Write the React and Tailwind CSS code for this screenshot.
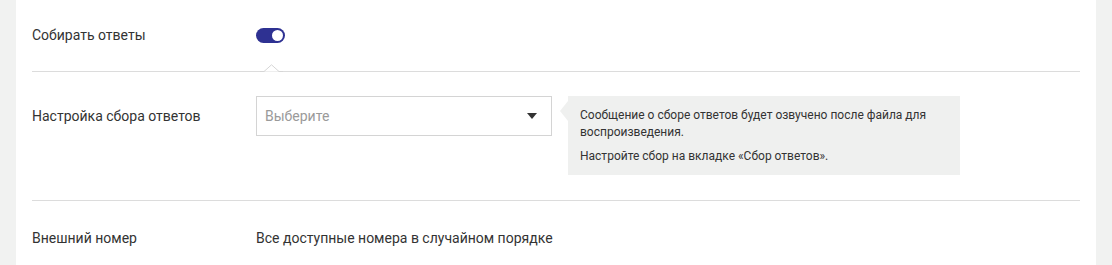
import { useState } from "react"

const font = { fontFamily: "Roboto, 'Liberation Sans', sans-serif" }

function Toggle({ on, onChange }) {
  return (
    <button
      onClick={() => onChange(!on)}
      className={`relative w-[29px] h-[15px] rounded-full ${on ? "bg-[#2e3192]" : "bg-[#bdbdbd]"}`}
    >
      <span
        className={`absolute top-[2px] w-[11px] h-[11px] rounded-full bg-white ${on ? "left-[16px]" : "left-[2px]"}`}
      />
    </button>
  )
}

export default function App() {
  const [collect, setCollect] = useState(true)

  return (
    <div style={font} className="w-[1112px] h-[265px] bg-[#f1f2f1] px-4 overflow-hidden">
      <div className="bg-white h-full px-4 text-[14px] text-[#333]">

        {/* row: collect answers */}
        <div className="flex items-center h-[71px]">
          <div className="w-[224px]">Собирать ответы</div>
          <Toggle on={collect} onChange={setCollect} />
        </div>

        {/* divider with notch */}
        <div className="relative h-px bg-[#dcdcdc]">
          <svg
            className="absolute left-[228px] -top-[7px]"
            width="23"
            height="8"
            viewBox="0 0 23 8"
          >
            <path d="M0 7.5 L4 7.5 L11.5 0.8 L19 7.5 L23 7.5 Z" fill="white" stroke="none" />
            <path d="M0 7.5 L4 7.5 L11.5 0.8 L19 7.5 L23 7.5" fill="none" stroke="#d6d6d6" strokeWidth="1" />
          </svg>
        </div>

        {/* row: settings */}
        <div className="flex items-start pt-6 pb-[25px]">
          <div className="w-[224px] h-10 flex items-center">Настройка сбора ответов</div>
          <div className="w-[296px] h-10 border border-[#d4d4d4] flex items-center justify-between pl-2 pr-[14px]">
            <span className="text-[#9a9a9a]">Выберите</span>
            <svg width="10" height="6" viewBox="0 0 10 6">
              <path d="M0 0 H10 L5 6 Z" fill="#333" />
            </svg>
          </div>
          <div className="relative ml-4 w-[392px] bg-[#eff0ef] pl-3 pr-3 pt-[11px] pb-[10px] text-[12px] leading-[17px] text-[#333]">
            <svg className="absolute -left-[8px] top-[5px]" width="8" height="20" viewBox="0 0 8 20">
              <path d="M8 0 L0 10 L8 20 Z" fill="#eff0ef" />
            </svg>
            <p>Сообщение о сборе ответов будет озвучено после файла для воспроизведения.</p>
            <p className="mt-[7px]">Настройте сбор на вкладке «Сбор ответов».</p>
          </div>
        </div>

        <div className="h-px bg-[#dcdcdc]" />

        {/* row: external number */}
        <div className="flex items-center h-[75px]">
          <div className="w-[224px]">Внешний номер</div>
          <div>Все доступные номера в случайном порядке</div>
        </div>
      </div>
    </div>
  )
}
